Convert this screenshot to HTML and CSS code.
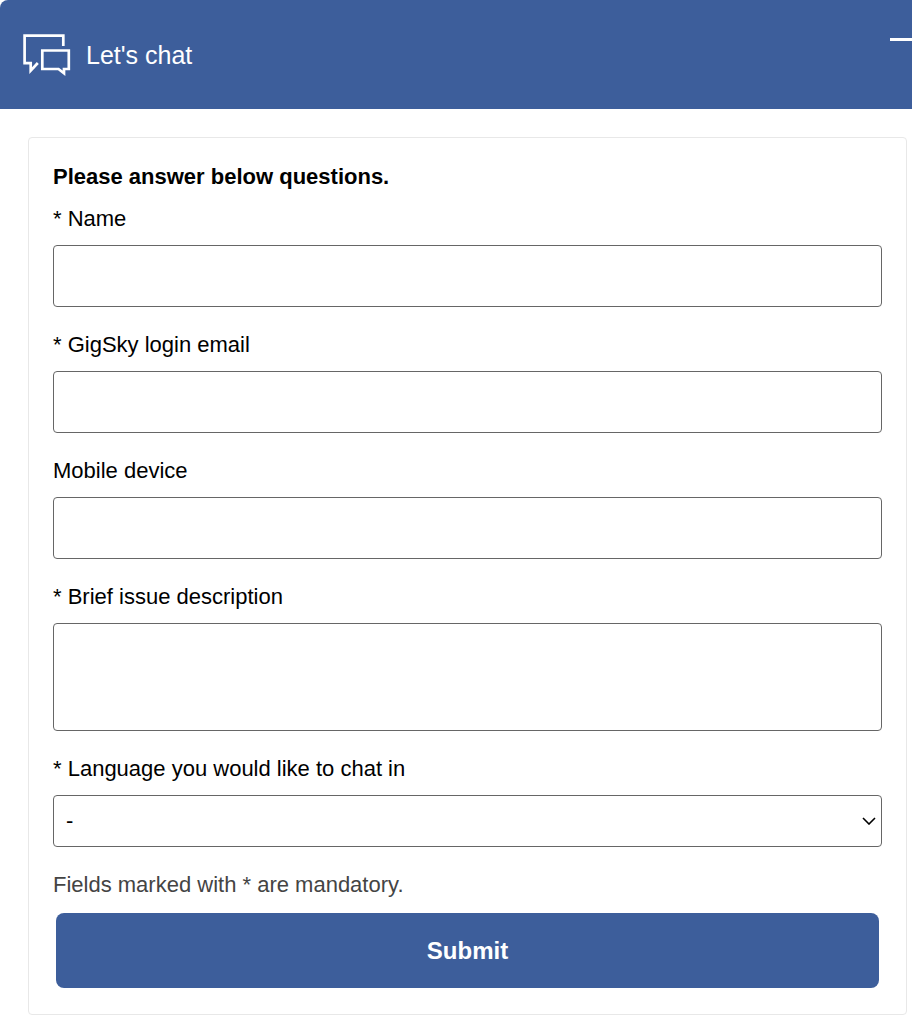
FILE: index.html
```html
<!DOCTYPE html>
<html lang="en">
<head>
<meta charset="utf-8">
    <meta name="viewport" content="width=device-width, initial-scale=1">
    <title>Let's chat</title>
    <link rel="stylesheet" href="styles.css">
</head>
<body>
    <header class="chat-header">
        <svg class="chat-icon" width="50" height="44" viewBox="0 0 50 44" fill="none" stroke="currentColor" stroke-width="2.700" aria-hidden="true">
            <path d="M41.300 13V2.700H2.600V30.200H8.700V37.600L15.800 30" />
            <path d="M20.300 17.500H46.800V36H42V40.200L36.500 36H20.300Z" />
        </svg>
        <h1 class="chat-title">Let's chat</h1>
        <button type="button" class="minimize" aria-label="Minimize"></button>
    </header>

    <form class="survey">
        <h2 class="survey-title">Please answer below questions.</h2>
        <div class="field">
            <label for="name">* Name</label>
            <input type="text" id="name" class="control" required />
        </div>
        <div class="field">
            <label for="email">* GigSky login email</label>
            <input type="email" id="email" class="control" required />
        </div>
        <div class="field">
            <label for="device">Mobile device</label>
            <input type="text" id="device" class="control" />
        </div>
        <div class="field">
            <label for="issue">* Brief issue description</label>
            <textarea id="issue" class="control control-area" required></textarea>
        </div>
        <div class="field">
            <label for="language">* Language you would like to chat in</label>
            <div class="select-wrap">
                <select id="language" class="control control-select" required>
                    <option>-</option>
                </select>
                <svg class="chevron" width="14" height="8" viewBox="0 0 14 8" fill="none" stroke="currentColor" stroke-width="1.600" aria-hidden="true">
                    <path d="M1 1l6 6 6-6" />
                </svg>
            </div>
        </div>
        <p class="note">Fields marked with * are mandatory.</p>
        <button type="submit" class="submit">Submit</button>
    </form>
</body>
</html>
```
FILE: styles.css
```css
* {
    box-sizing: border-box;
}
body {
    margin: 0;
    background-color: #fff;
    color: #000;
    font-family: "Liberation Sans", Arial, sans-serif;
    font-size: 22px;
    line-height: 26px;
    overflow-x: hidden;
}
.chat-header {
    display: flex;
    align-items: center;
    height: 109px;
    padding-left: 22px;
    background-color: #3d5e9b;
    color: #fff;
    border-top-left-radius: 8px;
}
.chat-icon {
    flex: none;
    margin-right: 14px;
    overflow: visible;
}
.chat-title {
    flex: 1;
    margin: 0;
    font-size: 25px;
    font-weight: normal;
}
.minimize {
    align-self: flex-start;
    width: 22px;
    height: 41px;
    padding: 0;
    border: 0;
    border-bottom: 3px solid #fff;
    background: none;
}
.survey {
    margin: 28px 5px 8px 28px;
    padding: 26px 24px;
    border: 1px solid #e8e8e8;
    border-radius: 4px;
}
.survey-title {
    margin: 0 0 16px;
    font-size: 22px;
}
.field {
    display: flex;
    flex-direction: column;
    gap: 13px;
    margin-bottom: 25px;
}
.control {
    display: block;
    width: 100%;
    height: 62px;
    margin: 0;
    padding: 0 12px;
    border: 1px solid #666;
    border-radius: 4px;
    background-color: #fff;
    color: #000;
    font: inherit;
}
.control-area {
    height: 108px;
    padding: 12px;
    resize: none;
}
.select-wrap {
    position: relative;
}
.control-select {
    height: 52px;
    appearance: none;
}
.chevron {
    position: absolute;
    top: 22px;
    right: 6px;
    pointer-events: none;
}
.note {
    margin: 0 0 15px;
    color: #444;
}
.submit {
    display: block;
    width: calc(100% - 6px);
    height: 75px;
    margin: 0 auto;
    border: 0;
    border-radius: 8px;
    background-color: #3d5e9b;
    color: #fff;
    font: bold 24px "Liberation Sans", Arial, sans-serif;
}
```
